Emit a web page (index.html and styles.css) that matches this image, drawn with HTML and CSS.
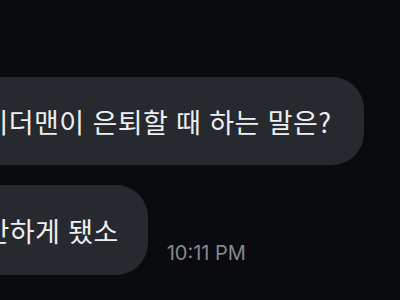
FILE: index.html
```html
<!DOCTYPE html>
<html lang="ko">
<head>
  <meta charset="UTF-8">
  <meta name="viewport" content="width=device-width, initial-scale=1.0">
  <title>Chat</title>
  <link rel="stylesheet" href="styles.css">
</head>
<body>
  <!-- Chat thread -->
  <div class="thread">
    <div class="row">
      <div class="bubble first">스파이더맨이 은퇴할 때 하는 말은?</div>
    </div>
    <div class="row">
      <div class="bubble second">거미안하게 됐소</div>
      <span class="time">10:11 PM</span>
    </div>
  </div>
</body>
</html>
```

FILE: styles.css
```css
:root {
  --bg-dark: #0a0b0e;
  --bubble-bg: #26292e;
  --text-white: #eeeff1;
  --text-muted: #86888d;
}
body {
  margin: 0;
  padding: 0;
  background: var(--bg-dark);
  font-family: 'Noto Sans CJK KR', 'Noto Sans', sans-serif;
  color: var(--text-white);
  overflow: hidden;
  width: 400px;
  height: 300px;
}
/* Thread */
.thread {
  display: flex;
  flex-direction: column;
  gap: 20px;
  padding-top: 77px;
}
.row {
  display: flex;
  align-items: flex-end;
  gap: 19px;
}
/* Bubbles */
.bubble {
  flex: none;
  display: flex;
  align-items: center;
  background: var(--bubble-bg);
  border-radius: 0 32px 32px 0;
  font-size: 27px;
  letter-spacing: 0.4px;
  white-space: nowrap;
}
.bubble.first {
  height: 88px;
  margin-left: -67px;
  padding-right: 33px;
}
.bubble.second {
  height: 90px;
  margin-left: -66px;
  padding-right: 29px;
}
.time {
  font-family: Inter, 'Liberation Sans', sans-serif;
  font-size: 20px;
  color: var(--text-muted);
  margin-bottom: 10px;
}
```
